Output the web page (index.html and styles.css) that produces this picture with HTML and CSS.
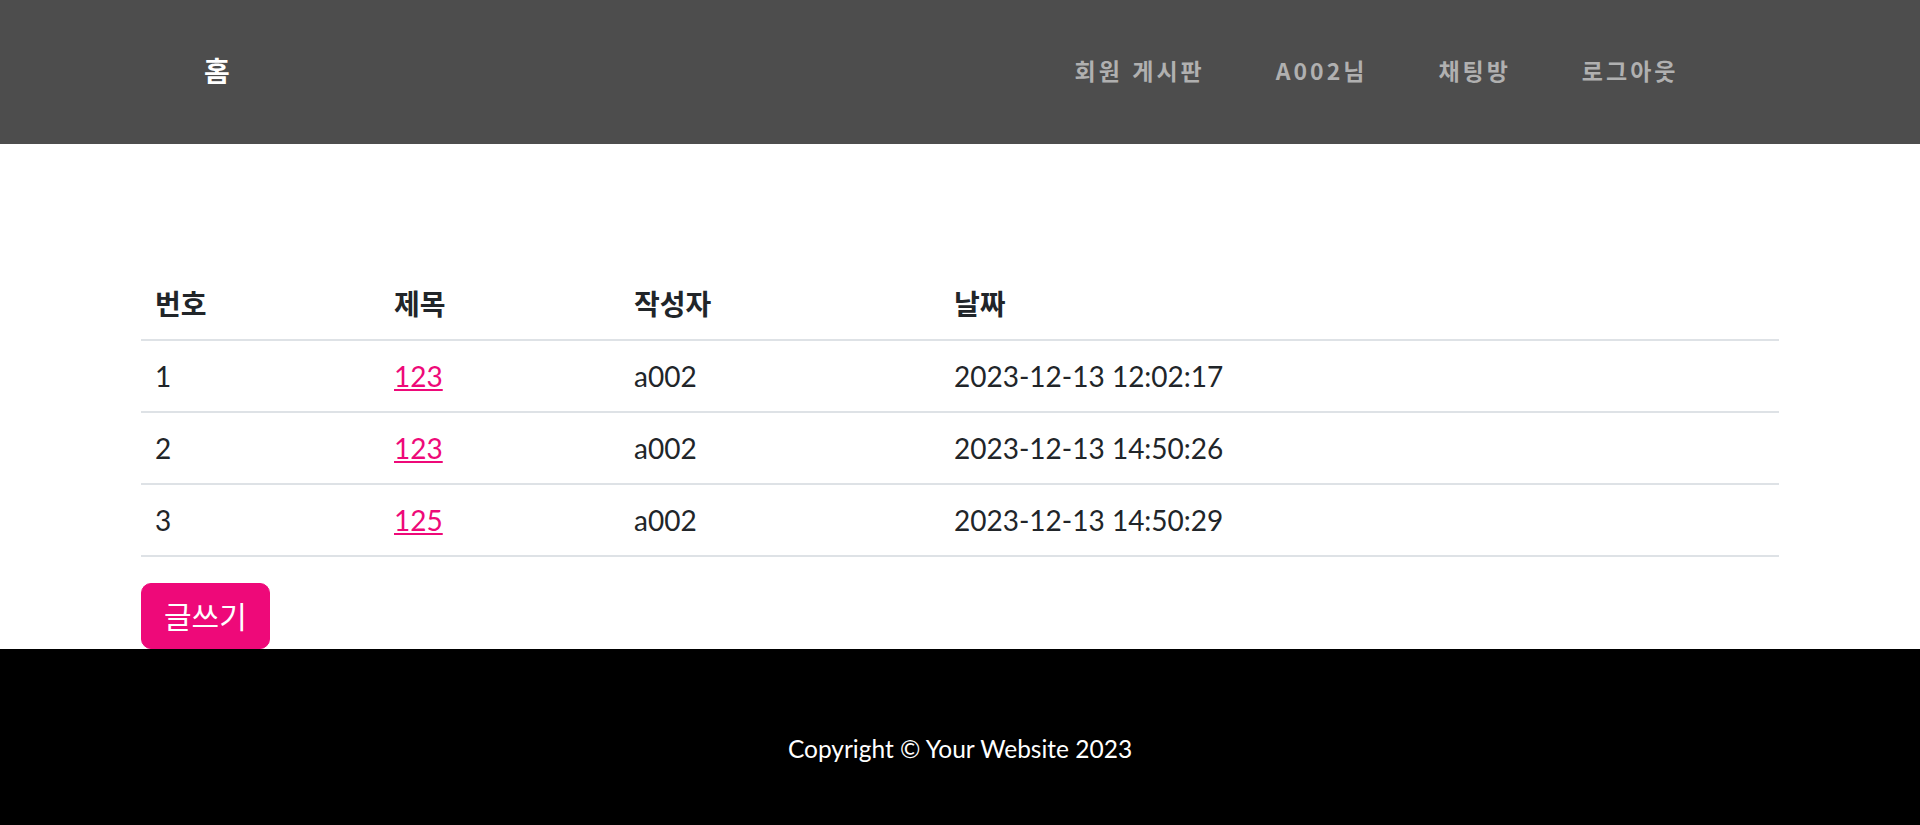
FILE: index.html
```html
<!DOCTYPE html>
<html lang="ko">
<head>
<meta charset="utf-8">
<title>회원 게시판</title>
<link rel="stylesheet" href="styles.css">
</head>
<body>
<header class="navbar">
  <div class="nav-inner">
    <a class="brand" href="#">홈</a>
    <nav class="nav-links">
      <a class="nav-link" href="#">회원 게시판</a>
      <a class="nav-link" href="#">A002님</a>
      <a class="nav-link" href="#">채팅방</a>
      <a class="nav-link" href="#">로그아웃</a>
    </nav>
  </div>
</header>
<main class="main">
  <table class="board">
    <colgroup>
      <col class="c-num">
      <col class="c-title">
      <col class="c-author">
      <col class="c-date">
    </colgroup>
    <thead>
      <tr><th>번호</th><th>제목</th><th>작성자</th><th>날짜</th></tr>
    </thead>
    <tbody>
      <tr><td>1</td><td><a class="post-link" href="#">123</a></td><td>a002</td><td>2023-12-13 12:02:17</td></tr>
      <tr><td>2</td><td><a class="post-link" href="#">123</a></td><td>a002</td><td>2023-12-13 14:50:26</td></tr>
      <tr><td>3</td><td><a class="post-link" href="#">125</a></td><td>a002</td><td>2023-12-13 14:50:29</td></tr>
    </tbody>
  </table>
  <a class="btn-write" href="#">글쓰기</a>
</main>
<footer class="footer">
  <p class="copyright">Copyright © Your Website 2023</p>
</footer>
</body>
</html>
```

FILE: styles.css
```css
* { box-sizing: border-box; }

html, body {
  margin: 0;
  padding: 0;
}

body {
  font-family: "Lato", "Noto Sans CJK KR", sans-serif;
  font-size: 28px;
  line-height: 42px;
  color: #212529;
  background: #fff;
}

.navbar {
  height: 144px;
  background: #4d4d4d;
  display: flex;
  align-items: center;
  padding-bottom: 5px;
}

.nav-inner {
  width: 100%;
  padding: 0 204px;
  display: flex;
  align-items: center;
  justify-content: space-between;
}

.brand {
  font-family: "Noto Sans CJK KR", sans-serif;
  font-weight: 700;
  font-size: 28px;
  letter-spacing: 2.8px;
  color: #fff;
  text-decoration: none;
  line-height: 42px;
}

.nav-links {
  display: flex;
  align-items: center;
  margin-right: 2px;
}

.nav-link {
  font-family: "Noto Sans CJK KR", sans-serif;
  font-weight: 700;
  font-size: 23px;
  letter-spacing: 3px;
  color: #b0b0b0;
  text-decoration: none;
  padding: 0 35.5px;
  line-height: 42px;
}

.main {
  padding: 125px 141px 0;
}

.board {
  width: 100%;
  border-collapse: collapse;
  table-layout: fixed;
  margin-bottom: 26px;
}

.c-num { width: 239px; }
.c-title { width: 240px; }
.c-author { width: 320px; }
.c-date { width: auto; }

.board th,
.board td {
  text-align: left;
  padding: 14px 14px;
  line-height: 42px;
  border-bottom: 2px solid #dee2e6;
  vertical-align: middle;
}

.board th {
  font-weight: 700;
}

.post-link {
  color: #ee0979;
  text-decoration: underline;
}

.btn-write {
  display: inline-block;
  background: #ee0979;
  color: #fff;
  text-decoration: none;
  padding: 11px 22px;
  line-height: 42px;
  border: 1px solid #ee0979;
  border-radius: 10px;
  font-size: 30px;
}

.footer {
  background: #000;
  padding: 79px 0 84px;
  text-align: center;
}

.copyright {
  margin: 0;
  color: #fff;
  font-size: 24.5px;
  line-height: 42px;
}
```
